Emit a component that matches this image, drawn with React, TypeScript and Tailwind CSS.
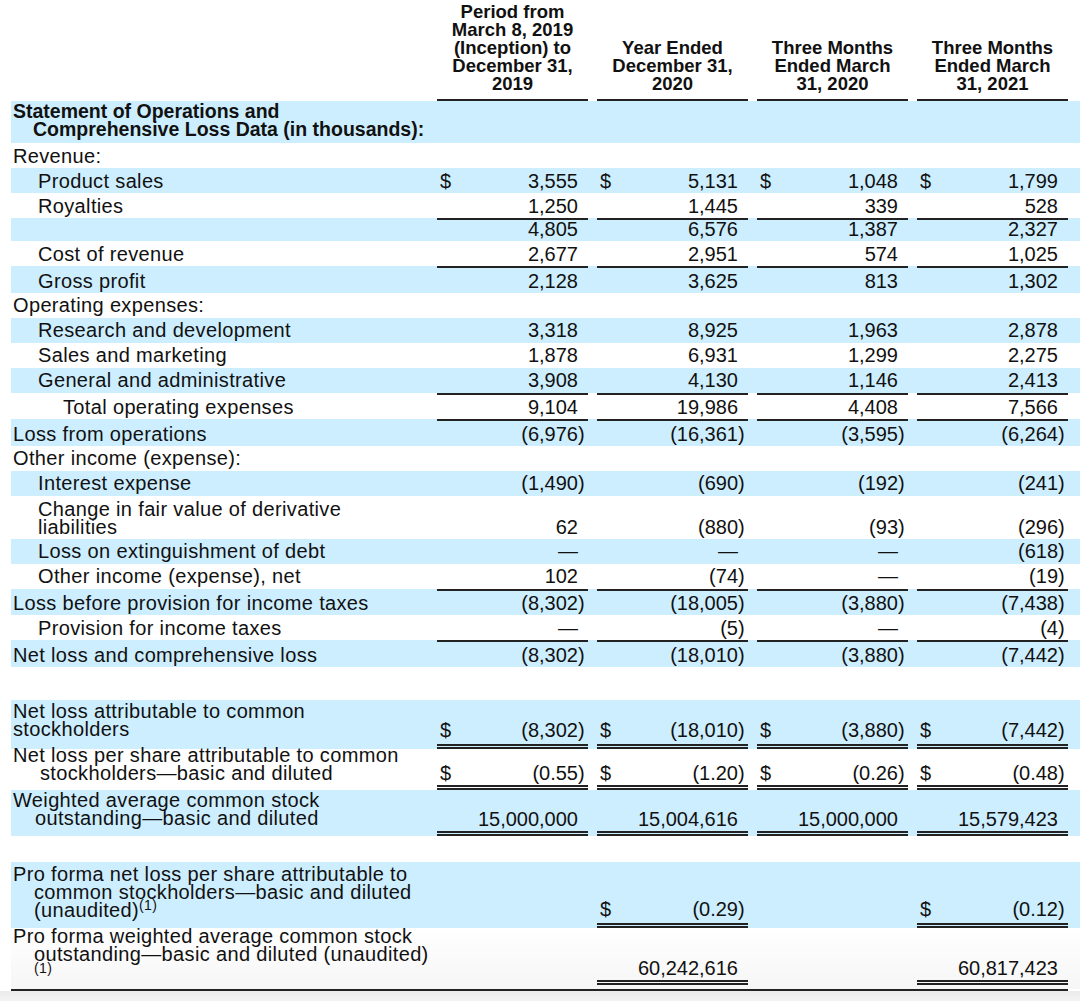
const BLUE = "bg-[#cdeeff]";

type Line = [React.ReactNode, string];

type RowProps = {
  blue?: boolean;
  bold?: boolean;
  lines: Line[];
  vals?: string[];
  dollars?: boolean[];
  top?: boolean;
  dbl?: boolean[];
  pad?: string;
  vpad?: string;
  extra?: string;
};

const Amount = ({ v }: { v: string }) => {
  const closes = v.endsWith(")");
  const body = closes ? v.slice(0, -1) : v;
  return (
    <span className="flex pr-[2px]">
      <span>{body}</span>
      <span className="w-[8px]">{closes ? ")" : ""}</span>
    </span>
  );
};

const Row = ({
  blue = false,
  bold = false,
  lines,
  vals,
  dollars = [],
  top = false,
  dbl = [],
  pad = "py-[3.5px]",
  vpad = "pb-[3.5px]",
  extra = "",
}: RowProps) => {
  const cells = vals ?? ["", "", "", ""];
  return (
    <div className={`flex ${blue ? BLUE : ""} ${extra}`}>
      <div
        className={`w-[426px] shrink-0 whitespace-nowrap leading-[18px] ${bold ? "font-bold text-[19.5px]" : "tracking-[0.35px]"} ${top ? "border-t-2 border-transparent" : ""} ${pad}`}
      >
        {lines.map(([t, pl], i) => (
          <div key={i} className={pl}>
            {t}
          </div>
        ))}
      </div>
      <div className="flex gap-[9px]">
        {cells.map((v, i) => (
          <div
            key={i}
            className={`w-[151px] flex items-end justify-between leading-[18px] ${top ? "border-t-2 border-[#222]" : ""} ${dbl[i] ? "border-b-[5px] border-double border-[#222]" : ""} ${vpad}`}
          >
            <span className="pl-[3px]">{dollars[i] ? "$" : ""}</span>
            {v ? <Amount v={v} /> : null}
          </div>
        ))}
      </div>
    </div>
  );
};

const all = [true, true, true, true];
const alt = [false, true, false, true];

// rows carrying a single rule above the amounts
const ruled = { top: true, pad: "pt-[3.5px] pb-[3px]", vpad: "pb-[3px]" };

const headers: React.ReactNode[] = [
  <>
    Period from
    <br />
    March 8, 2019
    <br />
    (Inception) to
    <br />
    December 31,
    <br />
    2019
  </>,
  <>
    Year Ended
    <br />
    December 31,
    <br />
    2020
  </>,
  <>
    Three Months
    <br />
    Ended March
    <br />
    31, 2020
  </>,
  <>
    Three Months
    <br />
    Ended March
    <br />
    31, 2021
  </>,
];

export default function App() {
  return (
    <div className="w-[1080px] h-[1001px] overflow-hidden bg-white text-[#111] text-[20px] font-['Liberation_Sans',Arial,sans-serif] flex flex-col">
      <div className="pl-[11px]">
        {/* column headers */}
        <div className="flex h-[101px]">
          <div className="w-[426px] shrink-0" />
          <div className="flex gap-[9px]">
            {headers.map((h, i) => (
              <div
                key={i}
                className="w-[151px] flex flex-col justify-end items-center text-center font-bold text-[18.5px] leading-[18px] pb-[6px] border-b-2 border-[#222] whitespace-nowrap"
              >
                <div>{h}</div>
              </div>
            ))}
          </div>
        </div>

        <Row
          blue
          bold
          pad="pt-[1px] pb-[5px]"
          lines={[
            ["Statement of Operations and", "pl-[2px]"],
            ["Comprehensive Loss Data (in thousands):", "pl-[22px]"],
          ]}
        />
        <Row lines={[["Revenue:", "pl-[2px]"]]} />
        <Row
          blue
          lines={[["Product sales", "pl-[27px]"]]}
          vals={["3,555", "5,131", "1,048", "1,799"]}
          dollars={all}
        />
        <Row lines={[["Royalties", "pl-[27px]"]]} vals={["1,250", "1,445", "339", "528"]} />
        <Row blue {...ruled} lines={[["", "pl-[27px]"]]} vals={["4,805", "6,576", "1,387", "2,327"]} />
        <Row lines={[["Cost of revenue", "pl-[27px]"]]} vals={["2,677", "2,951", "574", "1,025"]} />
        <Row
          blue
          {...ruled}
          lines={[["Gross profit", "pl-[27px]"]]}
          vals={["2,128", "3,625", "813", "1,302"]}
        />
        <Row lines={[["Operating expenses:", "pl-[2px]"]]} />
        <Row
          blue
          lines={[["Research and development", "pl-[27px]"]]}
          vals={["3,318", "8,925", "1,963", "2,878"]}
        />
        <Row lines={[["Sales and marketing", "pl-[27px]"]]} vals={["1,878", "6,931", "1,299", "2,275"]} />
        <Row
          blue
          lines={[["General and administrative", "pl-[27px]"]]}
          vals={["3,908", "4,130", "1,146", "2,413"]}
        />
        <Row
          {...ruled}
          lines={[["Total operating expenses", "pl-[52px]"]]}
          vals={["9,104", "19,986", "4,408", "7,566"]}
        />
        <Row
          blue
          {...ruled}
          lines={[["Loss from operations", "pl-[2px]"]]}
          vals={["(6,976)", "(16,361)", "(3,595)", "(6,264)"]}
        />
        <Row lines={[["Other income (expense):", "pl-[2px]"]]} />
        <Row
          blue
          lines={[["Interest expense", "pl-[27px]"]]}
          vals={["(1,490)", "(690)", "(192)", "(241)"]}
        />
        <Row
          pad="pt-[4px] pb-[3px]"
          vpad="pb-[3px]"
          lines={[
            ["Change in fair value of derivative", "pl-[27px]"],
            ["liabilities", "pl-[27px]"],
          ]}
          vals={["62", "(880)", "(93)", "(296)"]}
        />
        <Row
          blue
          lines={[["Loss on extinguishment of debt", "pl-[27px]"]]}
          vals={["—", "—", "—", "(618)"]}
        />
        <Row
          lines={[["Other income (expense), net", "pl-[27px]"]]}
          vals={["102", "(74)", "—", "(19)"]}
        />
        <Row
          blue
          {...ruled}
          lines={[["Loss before provision for income taxes", "pl-[2px]"]]}
          vals={["(8,302)", "(18,005)", "(3,880)", "(7,438)"]}
        />
        <Row lines={[["Provision for income taxes", "pl-[27px]"]]} vals={["—", "(5)", "—", "(4)"]} />
        <Row
          blue
          {...ruled}
          lines={[["Net loss and comprehensive loss", "pl-[2px]"]]}
          vals={["(8,302)", "(18,010)", "(3,880)", "(7,442)"]}
        />

        <div className="h-[33px]" />

        <Row
          blue
          pad="pt-[2px] pb-[11px]"
          vpad="pb-[5px]"
          lines={[
            ["Net loss attributable to common", "pl-[2px]"],
            ["stockholders", "pl-[2px]"],
          ]}
          vals={["(8,302)", "(18,010)", "(3,880)", "(7,442)"]}
          dollars={all}
          dbl={all}
        />
        <Row
          pad="-mt-[3px] pb-[8px]"
          vpad="pb-[3px]"
          lines={[
            ["Net loss per share attributable to common", "pl-[2px]"],
            ["stockholders—basic and diluted", "pl-[29px]"],
          ]}
          vals={["(0.55)", "(1.20)", "(0.26)", "(0.48)"]}
          dollars={all}
          dbl={all}
        />
        <Row
          blue
          pad="pt-[1px] pb-[9px]"
          vpad="pb-[3px]"
          lines={[
            ["Weighted average common stock", "pl-[2px]"],
            ["outstanding—basic and diluted", "pl-[24px]"],
          ]}
          vals={["15,000,000", "15,004,616", "15,000,000", "15,579,423"]}
          dbl={all}
        />

        <div className="h-[26px]" />

        <Row
          blue
          pad="pt-[3px] pb-[9px]"
          vpad="pb-[5px]"
          lines={[
            ["Pro forma net loss per share attributable to", "pl-[2px]"],
            ["common stockholders—basic and diluted", "pl-[23px]"],
            [
              <>
                (unaudited)
                <span className="relative -top-[7px] text-[14px] leading-none">(1)</span>
              </>,
              "pl-[23px]",
            ],
          ]}
          vals={["", "(0.29)", "", "(0.12)"]}
          dollars={alt}
          dbl={alt}
        />
        <Row
          pad="-mt-[1px] pb-[15px]"
          vpad="pb-[3px] mb-[4px]"
          extra="bg-gradient-to-b from-white to-[#f6f6f6]"
          lines={[
            ["Pro forma weighted average common stock", "pl-[2px]"],
            ["outstanding—basic and diluted (unaudited)", "pl-[23px]"],
            [<span className="text-[14px] leading-[12px] block -mt-[1px]">(1)</span>, "pl-[23px]"],
          ]}
          vals={["", "60,242,616", "", "60,817,423"]}
          dbl={alt}
        />
        <div className="w-[1057px] h-[2px] bg-[#222]" />
      </div>
      <div className="flex-1 bg-gradient-to-b from-[#ebebeb] to-[#f3f3f3]" />
    </div>
  );
}
